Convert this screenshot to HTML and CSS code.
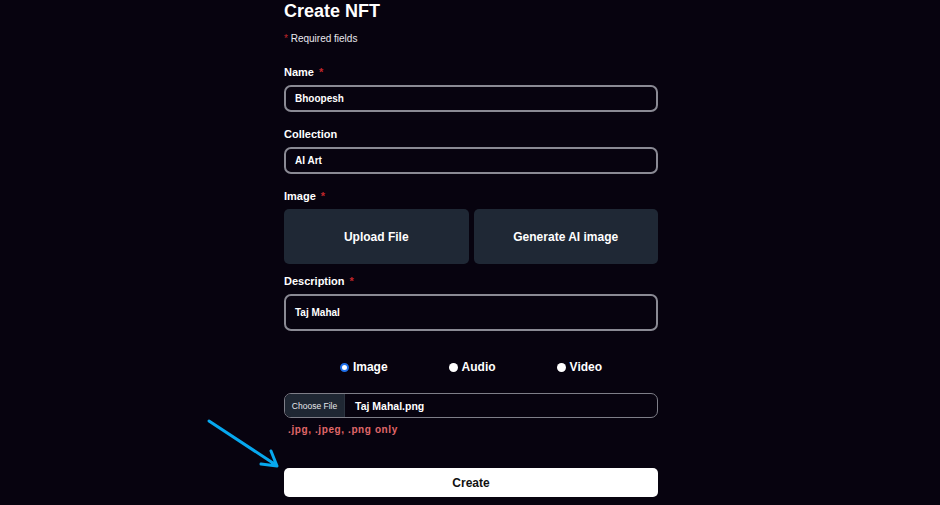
FILE: index.html
```html
<!DOCTYPE html>
<html>
<head>
<meta charset="utf-8">
<link rel="stylesheet" href="styles.css">
</head>
<body>
<main class="form">
  <h1 class="title">Create NFT</h1>
  <p class="required"><span class="star">*</span> Required fields</p>

  <label class="label">Name <span class="star">*</span></label>
  <div class="field">Bhoopesh</div>

  <label class="label">Collection</label>
  <div class="field">AI Art</div>

  <label class="label">Image <span class="star">*</span></label>
  <div class="choices">
    <div class="choice">Upload File</div>
    <div class="choice">Generate AI image</div>
  </div>

  <label class="label label-desc">Description <span class="star">*</span></label>
  <div class="field field-tall">Taj Mahal</div>

  <div class="radios">
    <div class="radio"><span class="dot dot-on"></span>Image</div>
    <div class="radio"><span class="dot"></span>Audio</div>
    <div class="radio"><span class="dot"></span>Video</div>
  </div>

  <div class="file">
    <span class="file-btn">Choose File</span>
    <span class="file-name">Taj Mahal.png</span>
  </div>
  <p class="hint">.jpg, .jpeg, .png only</p>

  <div class="create">Create</div>
</main>
<svg class="arrow" width="90" height="60" viewBox="0 0 90 60">
  <path d="M9 11 L76 55 M61 54 L77 56 L71 41" fill="none" stroke="#07a8ee" stroke-width="3" stroke-linecap="round" stroke-linejoin="round"/>
</svg>
</body>
</html>
```
FILE: styles.css
```css
html, body {
  margin: 0;
  padding: 0;
  background: #07030f;
  color: #ffffff;
  font-family: "Liberation Sans", Arial, sans-serif;
  height: 505px;
  overflow: hidden;
}

body {
  padding-left: 2px;
}

.form {
  width: 374px;
  margin: 0 auto;
  display: flex;
  flex-direction: column;
}

.title {
  margin: 0;
  font-size: 18px;
  line-height: 22px;
  font-weight: bold;
}

.required {
  margin: 10px 0 0;
  font-size: 10px;
  line-height: 14px;
  color: #e8e8ee;
}

.star {
  color: #c0262b;
  margin-left: 2px;
}

.required .star {
  margin-left: 0;
}

.label {
  display: block;
  font-size: 11px;
  line-height: 14px;
  font-weight: bold;
  margin-top: 19px;
}

.field + .label {
  margin-top: 15px;
}

.label-desc {
  margin-top: 10px;
}

.field {
  margin-top: 6px;
  height: 27px;
  box-sizing: border-box;
  border: 2px solid #8a8a94;
  border-radius: 7px;
  padding: 0 9px;
  display: flex;
  align-items: center;
  font-size: 10px;
  font-weight: bold;
}

.field-tall {
  height: 37px;
}

.choices {
  margin-top: 6px;
  display: flex;
  gap: 5px;
}

.choice {
  flex: 1;
  height: 55px;
  background: #1f2835;
  border-radius: 5px;
  display: flex;
  align-items: center;
  justify-content: center;
  font-size: 12px;
  font-weight: bold;
}

.radios {
  margin-top: 28px;
  display: flex;
  justify-content: center;
  gap: 61px;
  padding-left: 0;
}

.radio {
  display: flex;
  align-items: center;
  gap: 4px;
  font-size: 12px;
  font-weight: bold;
  line-height: 16px;
}

.dot {
  width: 9px;
  height: 9px;
  border-radius: 50%;
  background: #ffffff;
  box-sizing: border-box;
}

.dot-on {
  background: #ffffff;
  border: 2.5px solid #1f6fe8;
}

.file {
  margin-top: 18px;
  height: 25px;
  box-sizing: border-box;
  border: 1.5px solid #7e7e88;
  border-radius: 7px;
  display: flex;
  align-items: stretch;
  overflow: hidden;
}

.file-btn {
  background: #1f2733;
  color: #e6e6ea;
  font-size: 8.5px;
  white-space: nowrap;
  display: flex;
  align-items: center;
  justify-content: center;
  width: 60px;
  box-sizing: border-box;
  border-right: 1px solid #2c3440;
}

.file-name {
  display: flex;
  align-items: center;
  padding-left: 10px;
  font-size: 10.5px;
  font-weight: bold;
}

.hint {
  margin: 5px 0 0 4px;
  font-size: 10px;
  line-height: 14px;
  font-weight: bold;
  letter-spacing: 0.6px;
  color: #e0686a;
}

.create {
  margin-top: 31px;
  height: 29px;
  background: #ffffff;
  color: #111111;
  border-radius: 5px;
  display: flex;
  align-items: center;
  justify-content: center;
  font-size: 12px;
  font-weight: bold;
}

.arrow {
  position: absolute;
  left: 200px;
  top: 410px;
}
```
